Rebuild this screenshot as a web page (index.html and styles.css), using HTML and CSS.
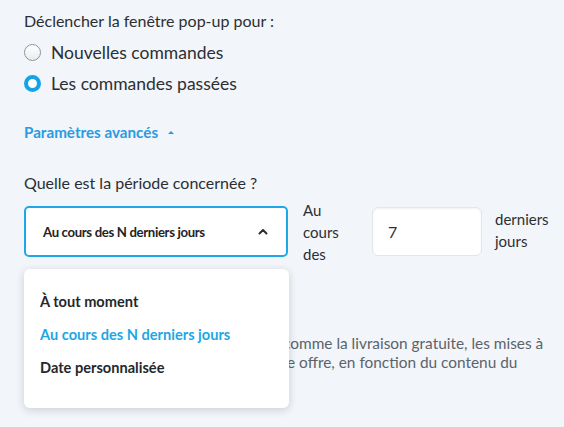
FILE: index.html
```html
<!DOCTYPE html>
<html lang="fr">
<head>
<meta charset="utf-8">
<link rel="stylesheet" href="styles.css">
</head>
<body>
<div class="page">
  <div class="title">Déclencher la fenêtre pop-up pour :</div>
  <div class="radios">
    <label class="radio-row"><span class="radio"></span><span>Nouvelles commandes</span></label>
    <label class="radio-row"><span class="radio checked"></span><span>Les commandes passées</span></label>
  </div>
  <div class="advanced">Paramètres avancés <span class="caret"></span></div>
  <div class="question">Quelle est la période concernée ?</div>
  <div class="period-row">
    <div class="select-wrap">
      <div class="select">
        <span>Au cours des N derniers jours</span>
        <svg class="chev" width="10" height="7" viewBox="0 0 10 7"><path d="M1.5 5.5 L5 2 L8.5 5.5" fill="none" stroke="#2b2f33" stroke-width="2" stroke-linecap="round" stroke-linejoin="round"/></svg>
      </div>
      <div class="menu">
        <div class="item">À tout moment</div>
        <div class="item active">Au cours des N derniers jours</div>
        <div class="item">Date personnalisée</div>
      </div>
    </div>
    <div class="lbl lbl-a">Au cours des</div>
    <div class="num">7</div>
    <div class="lbl lbl-b">derniers jours</div>
  </div>
  <p class="desc">Proposez des avantages via la pop-up, comme la livraison gratuite, les mises à<br>niveau gratuites, cadeaux ou toute autre offre, en fonction du contenu du<br>panier de vos clients.</p>
</div>
</body>
</html>
```
FILE: styles.css
```css
html, body {
  margin: 0;
  padding: 0;
  background: #f2f5f9;
}
body {
  font-family: "Lato", "Open Sans", sans-serif;
  color: #2b2f33;
  width: 564px;
  height: 427px;
  overflow: hidden;
}
.page {
  padding: 9px 24px 0 24px;
}
.title {
  font-size: 16px;
  line-height: 24px;
}
.radios {
  margin-top: 4px;
  display: flex;
  flex-direction: column;
}
.radio-row {
  display: flex;
  align-items: center;
  height: 31px;
  font-size: 17.5px;
  gap: 10px;
}
.radio {
  width: 15px;
  height: 15px;
  border-radius: 50%;
  border: 1px solid #8e959c;
  background: linear-gradient(#ffffff, #e9ecef);
  box-sizing: content-box;
  flex: none;
}
.radio.checked {
  width: 9px;
  height: 9px;
  border: 4px solid #16a3e6;
  background: #fff;
}
.advanced {
  margin-top: 23px;
  font-size: 15.2px;
  line-height: 20px;
  font-weight: 700;
  color: #2a9be0;
  display: flex;
  align-items: center;
  gap: 10px;
}
.caret {
  width: 0;
  height: 0;
  border-left: 3px solid transparent;
  border-right: 3px solid transparent;
  border-bottom: 3px solid #2a9be0;
}
.question {
  margin-top: 30px;
  font-size: 16px;
  line-height: 22px;
}
.period-row {
  margin-top: 12px;
  height: 51px;
  display: flex;
  align-items: center;
}
.select-wrap {
  position: relative;
  width: 264px;
  flex: none;
}
.select {
  box-sizing: border-box;
  height: 51px;
  border: 2px solid #1fa8e9;
  border-radius: 5px;
  background: #fff;
  display: flex;
  align-items: center;
  justify-content: space-between;
  padding: 0 18px 0 17px;
  font-size: 13.2px;
  letter-spacing: -0.35px;
  font-weight: 700;
  color: #1f2326;
}
.chev {
  display: block;
}
.menu {
  position: absolute;
  top: 63px;
  left: 0;
  width: 265px;
  box-sizing: border-box;
  background: #fff;
  border-radius: 6px;
  box-shadow: 0 2px 8px rgba(30, 40, 60, 0.18);
  padding: 16px 16px 24px 16px;
  z-index: 5;
}
.item {
  height: 33px;
  line-height: 33px;
  font-size: 14.6px;
  font-weight: 700;
  color: #24282c;
}
.item.active {
  color: #1da7e6;
}
.lbl {
  font-size: 15px;
  line-height: 22px;
  flex: none;
}
.lbl-a {
  width: 44px;
  margin-left: 15px;
}
.num {
  margin-left: 25px;
  width: 110px;
  height: 49px;
  box-sizing: border-box;
  background: #fff;
  border: 1px solid #e2e6ea;
  border-radius: 6px;
  box-shadow: inset 0 1px 2px rgba(0, 0, 0, 0.06);
  display: flex;
  align-items: center;
  padding-left: 15px;
  font-size: 16px;
  flex: none;
}
.lbl-b {
  margin-left: 13px;
  width: 56px;
  margin-top: -4px;
}
.desc {
  margin: 77px 0 0 0;
  font-size: 15.4px;
  line-height: 19px;
  color: #5b636b;
  white-space: nowrap;
}
```
